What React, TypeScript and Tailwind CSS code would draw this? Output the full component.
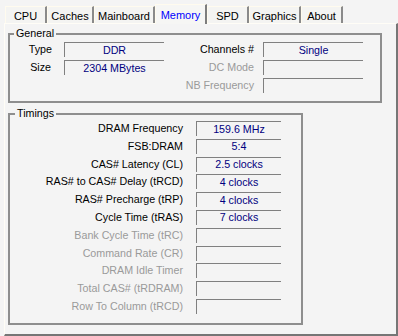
const tabs = [
  { name: "CPU", w: "w-[42px]" },
  { name: "Caches", w: "w-[47px]" },
  { name: "Mainboard", w: "w-[61px]" },
  { name: "Memory", w: "w-[52px]", active: true },
  { name: "SPD", w: "w-[42px]" },
  { name: "Graphics", w: "w-[52px]" },
  { name: "About", w: "w-[42px]" },
];

const timings = [
  { label: "DRAM Frequency", value: "159.6 MHz" },
  { label: "FSB:DRAM", value: "5:4" },
  { label: "CAS# Latency (CL)", value: "2.5 clocks" },
  { label: "RAS# to CAS# Delay (tRCD)", value: "4 clocks" },
  { label: "RAS# Precharge (tRP)", value: "4 clocks" },
  { label: "Cycle Time (tRAS)", value: "7 clocks" },
  { label: "Bank Cycle Time (tRC)" },
  { label: "Command Rate (CR)" },
  { label: "DRAM Idle Timer" },
  { label: "Total CAS# (tRDRAM)" },
  { label: "Row To Column (tRCD)" },
];

const Field = ({ value }: { value?: string }) => (
  <div className="h-[15px] border-t border-l border-[#808080] flex items-center justify-center text-[#000080] leading-[13px]">
    {value}
  </div>
);

const Label = ({ text, off, pr }: { text: string; off?: boolean; pr: string }) => (
  <div className={`text-right leading-[13px] whitespace-nowrap ${pr} ${off ? "text-[#9a9a9a]" : "text-black"}`}>
    {text}
  </div>
);

const App = () => {
  return (
    <div className="w-[398px] h-[336px] bg-[#f4f4f4] font-['Liberation_Sans',Arial,sans-serif] text-[10.7px] flex flex-col overflow-hidden">
      {/* tab strip */}
      <div className="h-[23px] flex items-end pl-[5px] relative z-10 text-[11px]">
        {tabs.map((t) =>
          t.active ? (
            <div
              key={t.name}
              className={`${t.w} h-[20px] -mb-[1px] bg-[#f6f6f4] border-l border-t border-[#fffbee] border-r-2 border-r-[#7d7d7d] flex justify-center pt-[4px] text-[#0000ff] leading-[13px]`}
            >
              {t.name}
            </div>
          ) : (
            <div
              key={t.name}
              className={`${t.w} h-[17px] bg-[#f4f4f2] border-l border-t border-[#fffbee] border-r-2 border-r-[#8a8a8a] flex justify-center pt-[3px] text-black leading-[13px]`}
            >
              {t.name}
            </div>
          )
        )}
      </div>

      {/* tab page */}
      <div className="flex-1 ml-[4px] border-l border-t border-[#fffdf6] border-r-2 border-b-2 border-r-[#767676] border-b-[#767676] pl-[3px] pt-[9px] flex flex-col">
        {/* General */}
        <div className="relative w-[374px] h-[70px] border-2 border-[#8e8e8e] pt-[7px]">
          <span className="absolute left-[4px] -top-[8px] px-[2px] bg-[#f4f4f4] leading-[13px] text-black">General</span>
          <div className="grid grid-cols-[54px_100px_99px_100px] grid-rows-[15px_15px_15px] gap-y-[3px] items-center">
            <Label text="Type" pr="pr-[12px]" />
            <Field value="DDR" />
            <Label text="Channels #" pr="pr-[9px]" />
            <Field value="Single" />
            <Label text="Size" pr="pr-[13px]" />
            <Field value="2304 MBytes" />
            <Label text="DC Mode" off pr="pr-[9px]" />
            <Field />
            <div />
            <div />
            <Label text="NB Frequency" off pr="pr-[9px]" />
            <Field />
          </div>
        </div>

        {/* Timings */}
        <div className="relative mt-[10px] w-[295px] h-[212px] border-2 border-[#8e8e8e] pt-[6px]">
          <span className="absolute left-[5px] -top-[8px] px-[2px] bg-[#f4f4f4] leading-[13px] text-black">Timings</span>
          <div className="grid grid-cols-[186px_85px] auto-rows-[15px] gap-y-[2.8px] items-center">
            {timings.map((r) => (
              <div key={r.label} className="contents">
                <Label text={r.label} off={!r.value} pr="pr-[13px]" />
                <Field value={r.value} />
              </div>
            ))}
          </div>
        </div>
      </div>
    </div>
  );
};

export default App;
